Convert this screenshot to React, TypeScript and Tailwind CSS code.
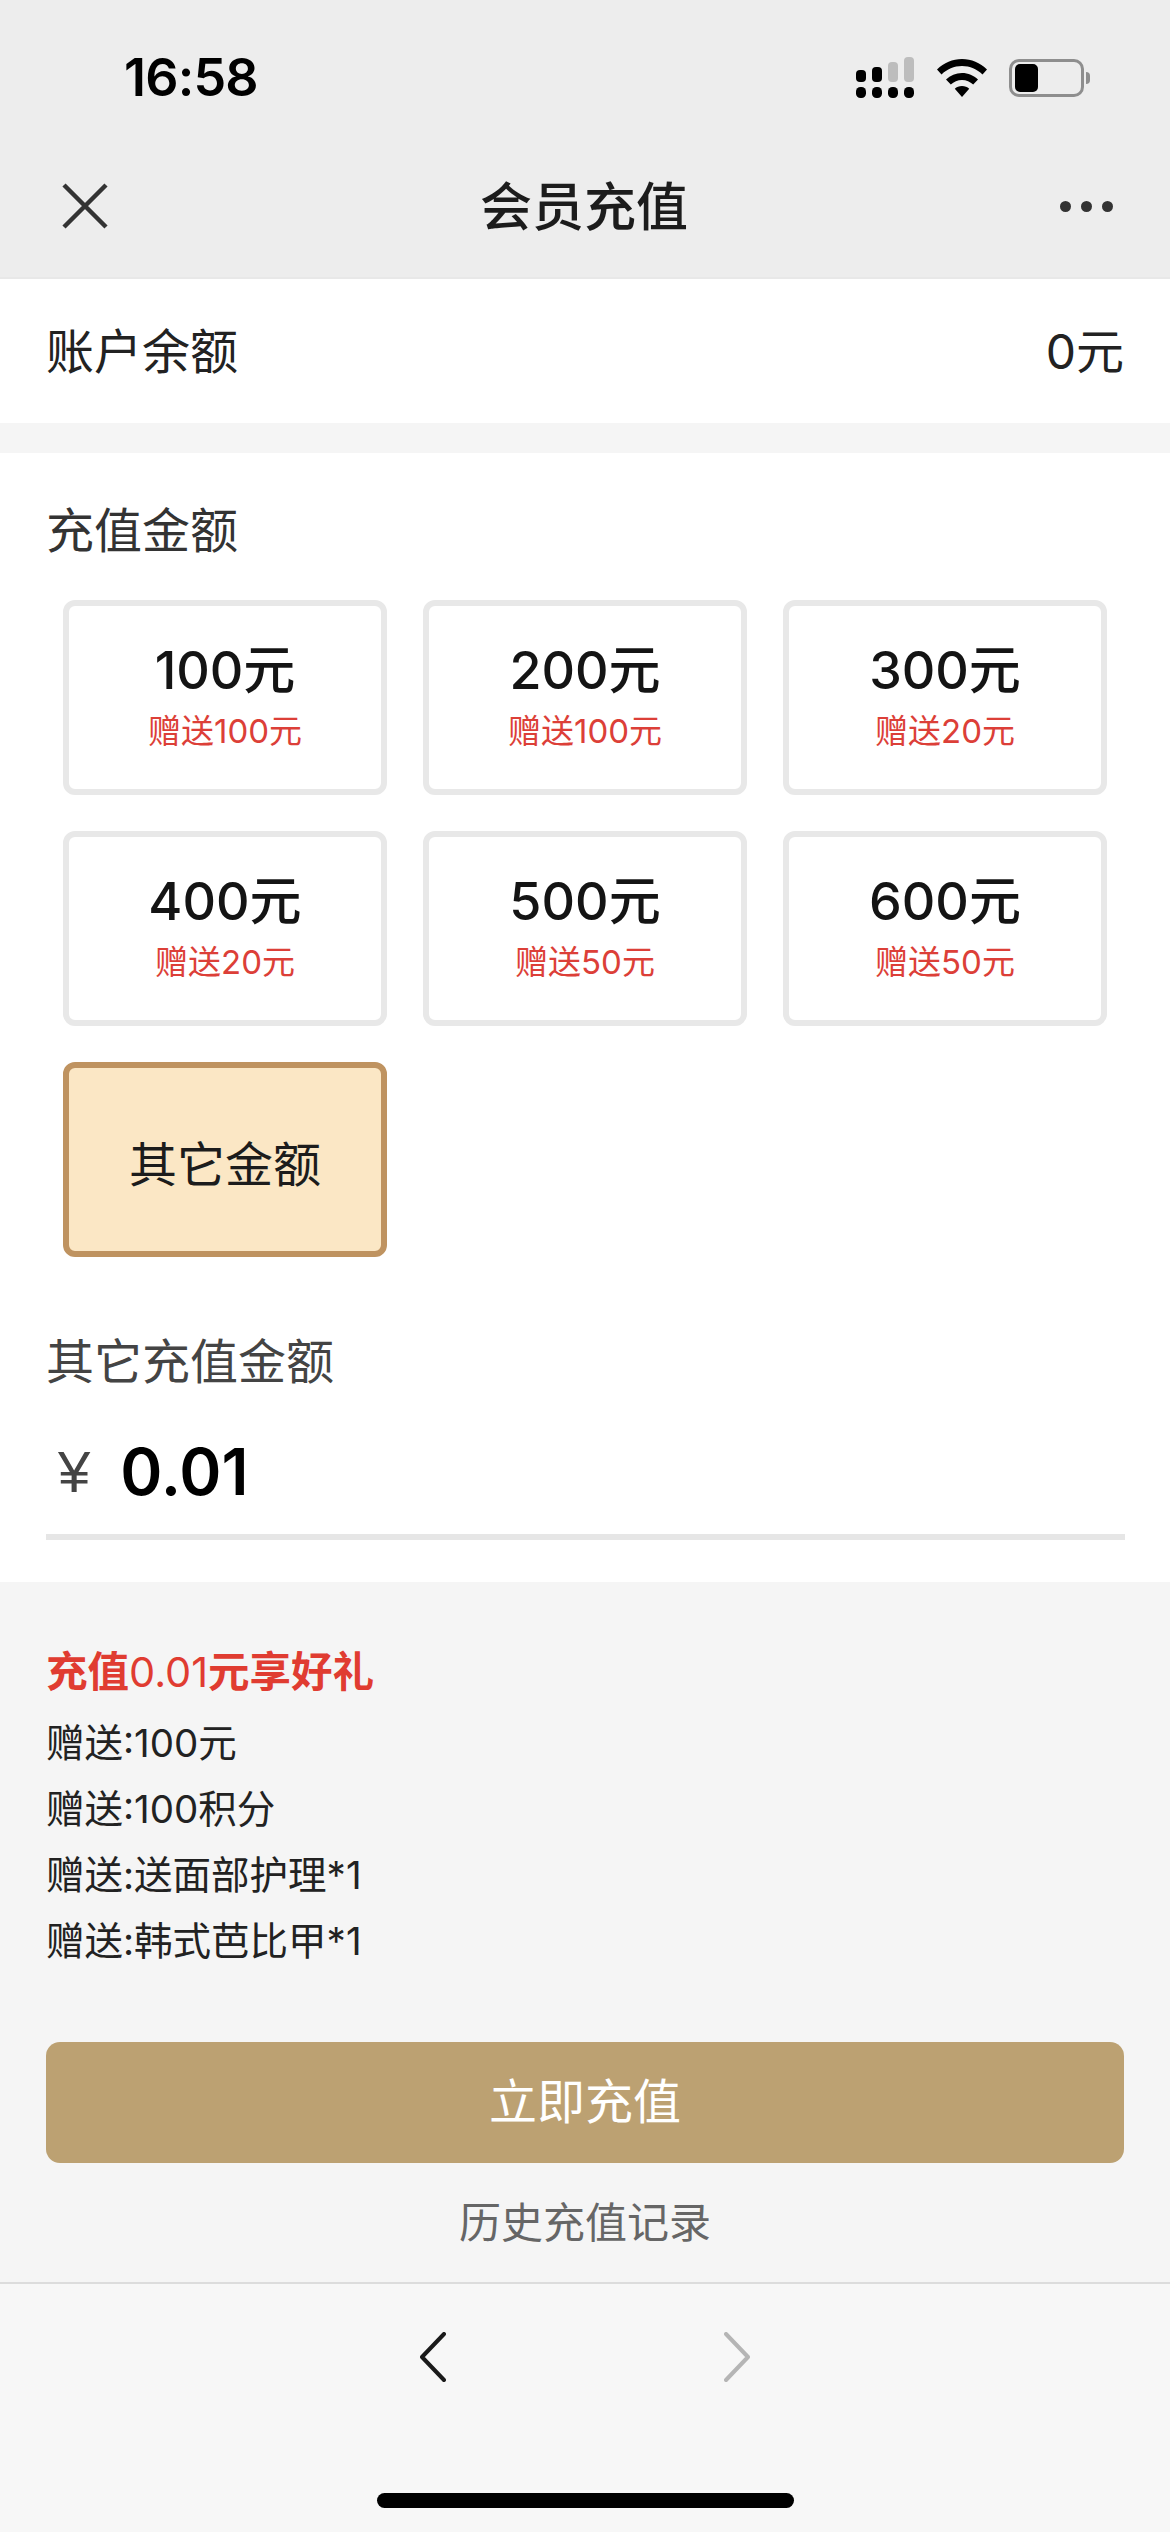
const amounts = [
  { value: "100元", gift: "赠送100元" },
  { value: "200元", gift: "赠送100元" },
  { value: "300元", gift: "赠送20元" },
  { value: "400元", gift: "赠送20元" },
  { value: "500元", gift: "赠送50元" },
  { value: "600元", gift: "赠送50元" },
];

const gifts = ["赠送:100元", "赠送:100积分", "赠送:送面部护理*1", "赠送:韩式芭比甲*1"];

function StatusIcons() {
  return (
    <div className="flex items-center">
      <svg width="62" height="42" viewBox="0 0 62 42">
        <rect x="0" y="13" width="10" height="12" rx="4" fill="#000" />
        <rect x="16" y="10" width="10" height="15" rx="4" fill="#000" />
        <rect x="32" y="5" width="10" height="20" rx="4" fill="#bdbdbd" />
        <rect x="48" y="0" width="10" height="25" rx="4" fill="#bdbdbd" />
        <rect x="0" y="30" width="10" height="11" rx="4.5" fill="#000" />
        <rect x="16" y="30" width="10" height="11" rx="4.5" fill="#000" />
        <rect x="32" y="30" width="10" height="11" rx="4.5" fill="#000" />
        <rect x="48" y="30" width="10" height="11" rx="4.5" fill="#000" />
      </svg>
      <svg className="ml-[19px]" width="50" height="38" viewBox="0 0 50 38">
        <path d="M25 0C15.500 0 7 3.700 0 10.500L4.500 15.500C10 10.200 17 7 25 7C33 7 40 10.200 45.500 15.500L50 10.500C43 3.700 34.500 0 25 0Z" fill="#000" />
        <path d="M25 14C18.800 14 13.400 16.400 9 20.500L13.800 25.500C16.800 22.800 20.700 21 25 21C29.300 21 33.200 22.800 36.200 25.500L41 20.500C36.600 16.400 31.200 14 25 14Z" fill="#000" />
        <path d="M25 27C22.200 27 19.600 28 17.800 29.800L25 38L32.200 29.800C30.400 28 27.800 27 25 27Z" fill="#000" />
      </svg>
      <div className="ml-[22px] flex h-[38px] w-[75px] items-center rounded-[10px] border-[3px] border-[#8e8e8e] pl-[3px]">
        <div className="h-[28px] w-[23px] rounded-[5px] bg-black" />
      </div>
      <div className="ml-[2px] h-[12px] w-[4px] rounded-r-full bg-[#8e8e8e]" />
    </div>
  );
}

export default function App() {
  return (
    <div className="flex min-h-[2532px] w-[1170px] flex-col bg-[#f5f5f5] font-['Inter','Noto_Sans_CJK_SC',sans-serif]">
      {/* status bar + nav */}
      <div className="h-[279px] bg-[#ededed] border-b-[2px] border-[#e8e8e8]">
        <div className="flex h-[156px] items-center justify-between pb-[1px] pl-[124px] pr-[80px]">
          <span className="text-[52px] font-semibold leading-[60px] tracking-[-0.8px] text-black">16:58</span>
          <StatusIcons />
        </div>
        <div className="relative flex h-[100px] items-center justify-between pl-[62px] pr-[57px]">
          <svg width="46" height="46" viewBox="0 0 46 46" fill="none" stroke="#333" strokeWidth="4.500">
            <path d="M2 2L44 44M44 2L2 44" />
          </svg>
          <span className="pt-[3px] text-[52px] font-medium leading-[60px] text-[#1c1c1c]">会员充值</span>
          <div className="flex gap-[10px]">
            <div className="size-[11px] rounded-full bg-[#333]" />
            <div className="size-[11px] rounded-full bg-[#333]" />
            <div className="size-[11px] rounded-full bg-[#333]" />
          </div>
        </div>
      </div>

      {/* balance */}
      <div className="flex h-[144px] items-center justify-between bg-white pl-[46px] pr-[46px] text-[48px] leading-[60px] text-[#222]">
        <span className="pt-[2px]">账户余额</span>
        <span className="pt-[2px]">0元</span>
      </div>

      {/* amounts */}
      <div className="mt-[30px] bg-white pb-[42px] pt-[48px]">
        <div className="pl-[46px] text-[48px] leading-[60px] text-[#333]">充值金额</div>
        <div className="mt-[39px] grid grid-cols-[324px_324px_324px] gap-x-[36px] gap-y-[36px] pl-[63px]">
          {amounts.map((a) => (
            <div key={a.value} className="flex h-[195px] flex-col items-center rounded-[12px] border-[6px] border-[#e8e8e8] pt-[35px]">
              <div className="text-[52px] font-medium leading-[60px] text-[#141414]">{a.value}</div>
              <div className="mt-[10px] text-[33px] leading-[40px] text-[#dc3f38]">{a.gift}</div>
            </div>
          ))}
          <div className="flex h-[195px] items-center justify-center rounded-[12px] border-[6px] border-[#bf9360] bg-[#fbe7c5] pt-[10px] text-[48px] text-[#1c1c1c]">
            其它金额
          </div>
        </div>

        <div className="mt-[74px] pl-[46px] pt-[2px] text-[48px] leading-[58px] text-[#444]">其它充值金额</div>
        <div className="mt-[31px] flex h-[100px] items-center pl-[58px]">
          <span className="text-[58px] leading-[60px] text-[#444] font-['Liberation_Sans',sans-serif]">¥</span>
          <span className="ml-[30px] text-[64px] font-semibold leading-[80px] text-black">0.01</span>
        </div>
        <div className="ml-[46px] mr-[45px] mt-[12px] h-[6px] bg-[#e6e6e6]" />
      </div>

      {/* gifts */}
      <div className="px-[46px] pt-[60px]">
        <div className="text-[41.5px] font-bold leading-[60px] text-[#e03c31]">
          充值<span className="font-normal">0.01</span>元享好礼
        </div>
        <div className="mt-[8px]">
          {gifts.map((g) => (
            <div key={g} className="text-[38.5px] leading-[66px] text-[#222]">
              {g}
            </div>
          ))}
        </div>
        <button className="mt-[68px] flex h-[121px] w-[1078px] items-center justify-center rounded-[14px] bg-[#bca172] pb-[2px] text-[48px] text-white">
          立即充值
        </button>
        <div className="mt-[30px] text-center text-[42px] leading-[60px] text-[#666]">历史充值记录</div>
      </div>

      {/* browser toolbar */}
      <div className="mt-[29px] flex flex-1 flex-col items-center border-t-[2px] border-[#dcdcdc] bg-[#f7f7f7] pt-[48px]">
        <div className="flex items-center gap-[278px]">
          <svg width="26" height="50" viewBox="0 0 26 50" fill="none" stroke="#1a1a1a" strokeWidth="4" strokeLinecap="round" strokeLinejoin="round">
            <path d="M24 2L2 25L24 48" />
          </svg>
          <svg width="26" height="50" viewBox="0 0 26 50" fill="none" stroke="#b5b5b5" strokeWidth="4" strokeLinecap="round" strokeLinejoin="round">
            <path d="M2 2L24 25L2 48" />
          </svg>
        </div>
        <div className="mt-[111px] h-[15px] w-[417px] rounded-full bg-black" />
      </div>
    </div>
  );
}
